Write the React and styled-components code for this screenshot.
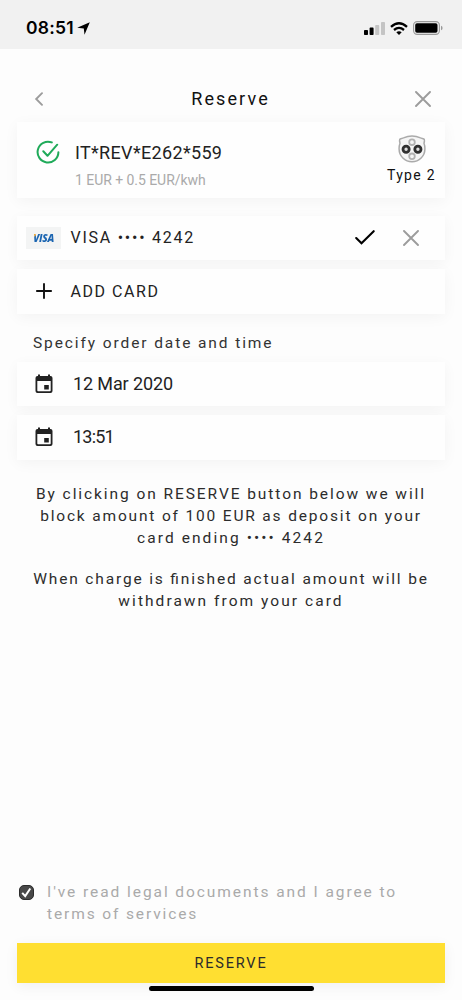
import React from "react";
import styled, { createGlobalStyle } from "styled-components";

const GlobalStyle = createGlobalStyle`
  * {
    box-sizing: border-box;
  }

  body {
    margin: 0;
    background: #fdfdfd;
    font-family: Roboto, "Liberation Sans", sans-serif;
    color: #222;
  }
`;

const Screen = styled.div`
  width: 462px;
  height: 1000px;
  display: flex;
  flex-direction: column;
  background: #fdfdfd;
  overflow: hidden;
`;

const StatusBar = styled.div`
  height: 49px;
  flex-shrink: 0;
  padding: 7px 19px 0 26px;
  display: flex;
  align-items: center;
  justify-content: space-between;
  background: #f1f1f1;
  color: #000;
`;

const Clock = styled.div`
  display: flex;
  align-items: center;
  gap: 3px;
  font-family: Inter, "Liberation Sans", sans-serif;
  font-size: 17.5px;
  font-weight: 600;
  letter-spacing: 0.2px;
  line-height: 20px;
`;

const StatusIcons = styled.div`
  display: flex;
  align-items: center;
  gap: 5px;
`;

const Header = styled.header`
  height: 73px;
  flex-shrink: 0;
  padding: 27px 31px 0 34px;
  display: flex;
  align-items: flex-start;
  justify-content: space-between;
`;

const Title = styled.h1`
  margin: 0;
  padding-left: 2px;
  height: 46px;
  font-size: 18px;
  font-weight: 400;
  line-height: 46px;
  letter-spacing: 2.1px;
  color: #111;
`;

const IconButton = styled.button`
  height: 46px;
  padding: 0;
  border: 0;
  background: none;
  display: flex;
  align-items: center;
`;

const Card = styled.section`
  height: ${(props) => props.$height || "44.5px"};
  flex-shrink: 0;
  margin: ${(props) => props.$margin || "0 17px 9px"};
  padding-left: ${(props) => props.$left || "18px"};
  display: flex;
  align-items: ${(props) => props.$align || "center"};
  background: #fefefe;
  box-shadow: 0 3px 14px rgba(0, 0, 0, 0.045);
`;

const StationIcon = styled.svg`
  margin-top: 18px;
`;

const Station = styled.div`
  flex: 1;
  padding: 18px 0 0 14px;
`;

const StationId = styled.div`
  font-size: 18px;
  line-height: 25px;
  letter-spacing: 0.33px;
`;

const Price = styled.div`
  margin-top: 4px;
  font-size: 14px;
  line-height: 23px;
  letter-spacing: -0.05px;
  color: #aaa;
`;

const Plug = styled.div`
  width: 67px;
  padding-top: 13px;
  display: flex;
  flex-direction: column;
  align-items: center;
  font-size: 14px;
  line-height: 24px;
  letter-spacing: 1.3px;
  color: #111;
`;

const VisaBadge = styled.div`
  width: 35px;
  height: 22px;
  display: flex;
  align-items: center;
  justify-content: center;
  background: #f3f4f4;
`;

const VisaMark = styled.span`
  padding: 0 1px;
  font-family: "Open Sans", sans-serif;
  font-size: 10px;
  font-weight: 800;
  font-style: italic;
  line-height: 22px;
  letter-spacing: -0.3px;
  background: linear-gradient(135deg, #efa93c 8px, #1b65b1 9px);
  -webkit-background-clip: text;
  color: transparent;
`;

const RowText = styled.span`
  flex: 1;
  margin-left: ${(props) => props.$left};
  padding-top: ${(props) => props.$drop || 0};
  font-size: ${(props) => props.$size || "16px"};
  line-height: 24px;
  letter-spacing: ${(props) => props.$spacing};
`;

const Actions = styled.div`
  display: flex;
  align-items: center;
  gap: 28px;
  padding-right: 26px;
`;

const Label = styled.div`
  height: 48px;
  flex-shrink: 0;
  margin-top: -9px;
  padding: 18.5px 33px 0;
  font-size: 15.5px;
  line-height: 22px;
  color: #333;
`;

const Notice = styled.div`
  margin-top: 14px;
  text-align: center;
  font-size: 15.5px;
  line-height: 22px;
  color: #2c2c2c;

  p {
    margin: 0 0 19px;
  }
`;

const Line = styled.span`
  display: block;
  letter-spacing: ${(props) => props.$spacing || "1.9px"};
  font-feature-settings: ${(props) => (props.$ligatures ? '"liga" 1' : "normal")};
`;

const Footer = styled.footer`
  margin-top: auto;
  padding: 0 17px 9px;
  display: flex;
  flex-direction: column;
`;

const Terms = styled.label`
  display: flex;
  align-items: flex-start;
  padding: 0 0 18px 2px;
  gap: 13px;
  font-size: 15.5px;
  line-height: 22px;
  color: #aaa;

  svg {
    margin-top: 4px;
  }
`;

const ReserveButton = styled.button`
  height: 40px;
  border: 0;
  padding: 0;
  background: #ffdf31;
  box-shadow: 0 3px 14px rgba(0, 0, 0, 0.06);
  color: #2b2b2b;
  font-family: inherit;
  font-size: 14.5px;
  letter-spacing: 1.8px;
`;

const HomeIndicator = styled.div`
  width: 165px;
  height: 5.5px;
  margin: 2.5px auto 0;
  border-radius: 3px;
  background: #000;
`;

const CloseIcon = ({ size = 16 }) => (
  <svg width={size} height={size} viewBox="0 0 16 16">
    <path d="M1 1l14 14M15 1L1 15" stroke="#9c9c9c" strokeWidth="1.9" strokeLinecap="round" />
  </svg>
);

const CalendarIcon = () => (
  <svg width="18" height="20" viewBox="0 0 18 20">
    <path
      fill="#222"
      fillRule="evenodd"
      d="M3 .5h2V2h8V.5h2V2h.5Q17.5 2 17.5 4v13q0 2-2 2h-13q-2 0-2-2V4q0-2 2-2H3zM2.3 7v9.4q0 .8.8.8h11.8q.8 0 .8-.8V7zM9.2 11h4.6v4.4H9.2z"
    />
  </svg>
);

const PlugIcon = () => (
  <svg width="28" height="28" viewBox="0 0 28 28" fill="none">
    <path
      d="M5.5 2.9Q14-.9 22.5 2.9L25.8 4Q26.6 4.4 26.4 6.5L26 8.3Q27 11 26.9 14A12.9 12.8 0 0 1 1.1 14Q1 11 2 8.3L1.6 6.5Q1.4 4.4 2.2 4z"
      stroke="#aaa"
      strokeWidth="1.5"
      fill="#f5f5f5"
    />
    <circle cx="14" cy="7.2" r="2.8" stroke="#b2b2b2" strokeWidth="1.8" />
    <circle cx="14" cy="21.3" r="2.8" stroke="#b2b2b2" strokeWidth="1.8" />
    <circle cx="8.1" cy="14.3" r="3.1" stroke="#303030" strokeWidth="2.8" fill="#ddd" />
    <circle cx="19.9" cy="14.3" r="3.1" stroke="#303030" strokeWidth="2.8" fill="#ddd" />
  </svg>
);

const App = () => {
  return (
    <>
      <GlobalStyle />
      <Screen>
        <StatusBar>
          <Clock>
            08:51
            <svg width="13" height="13" viewBox="0 0 13 13">
              <path d="M12.8.2L7.5 12.8 6.8 6.5.2 5.8z" />
            </svg>
          </Clock>
          <StatusIcons>
            <svg width="21" height="13" viewBox="0 0 21 13">
              <rect x="0" y="8" width="4" height="5" rx=".8" />
              <rect x="5.6" y="5.6" width="4" height="7.4" rx=".8" />
              <rect x="11.2" y="3" width="4" height="10" rx=".8" fill="#c4c4c4" />
              <rect x="17" y="0" width="4" height="13" rx=".8" fill="#c4c4c4" />
            </svg>
            <svg width="18" height="13" viewBox="0 0 18 13" fill="none" stroke="#000" strokeWidth="2.3">
              <path d="M1 4.8Q9-2.2 17 4.8M4 8Q9 3.8 14 8" />
              <path d="M6.3 10.3Q9 8.3 11.7 10.3L9 13z" fill="#000" stroke="none" />
            </svg>
            <svg width="30" height="14" viewBox="0 0 30 14">
              <rect x=".6" y=".6" width="25.8" height="12.8" rx="3.6" fill="none" stroke="#999" strokeWidth="1.1" />
              <rect x="2.2" y="2.2" width="22.3" height="9.6" rx="1.8" />
              <path d="M28 4.7q1.6.6 1.6 2.3T28 9.3z" fill="#999" />
            </svg>
          </StatusIcons>
        </StatusBar>

        <Header>
          <IconButton aria-label="Back">
            <svg width="10" height="14" viewBox="0 0 10 14" fill="none">
              <path d="M8 1.2L2.2 7 8 12.8" stroke="#9c9c9c" strokeWidth="1.9" strokeLinecap="round" />
            </svg>
          </IconButton>
          <Title>Reserve</Title>
          <IconButton aria-label="Close">
            <CloseIcon />
          </IconButton>
        </Header>

        <Card $height="76px" $margin="0 17px 17.5px" $left="19px" $align="flex-start">
          <StationIcon width="25" height="25" viewBox="0 0 25 25" fill="none">
            <path
              d="M15.8 2.4A10.4 10.4 0 1 0 22.4 12.2M7.3 11.3l4.2 4.5L21.2 4.7"
              stroke="#1faa59"
              strokeWidth="2"
              strokeLinecap="round"
              strokeLinejoin="round"
            />
          </StationIcon>
          <Station>
            <StationId>IT*REV*E262*559</StationId>
            <Price>1 EUR + 0.5 EUR/kwh</Price>
          </Station>
          <Plug>
            <PlugIcon />
            <span>Type 2</span>
          </Plug>
        </Card>

        <Card $left="9px">
          <VisaBadge>
            <VisaMark>VISA</VisaMark>
          </VisaBadge>
          <RowText $left="9.5px" $drop="1px" $spacing="1.75px">
            VISA •••• 4242
          </RowText>
          <Actions>
            <svg width="20" height="15" viewBox="0 0 20 15" fill="none">
              <path d="M1.2 8l5.3 5.3L18.7 1.2" stroke="#000" strokeWidth="2.1" strokeLinecap="round" />
            </svg>
            <CloseIcon />
          </Actions>
        </Card>

        <Card>
          <svg width="18" height="18" viewBox="0 0 18 18">
            <path d="M9 1.2v15.6M1.2 9h15.6" stroke="#111" strokeWidth="1.9" />
          </svg>
          <RowText $left="17.5px" $drop="2px" $spacing="1.55px">
            ADD CARD
          </RowText>
        </Card>

        <Label>
          <Line>Specify order date and time</Line>
        </Label>

        <Card>
          <CalendarIcon />
          <RowText $left="20px" $size="18px" $spacing="-0.12px">
            12 Mar 2020
          </RowText>
        </Card>
        <Card>
          <CalendarIcon />
          <RowText $left="20px" $size="18px" $spacing="-0.8px">
            13:51
          </RowText>
        </Card>

        <Notice>
          <p>
            <Line $spacing="1.93px">By clicking on RESERVE button below we will</Line>
            <Line $spacing="1.83px">block amount of 100 EUR as deposit on your</Line>
            <Line $spacing="2.08px">card ending •••• 4242</Line>
          </p>
          <p>
            <Line $spacing="1.84px" $ligatures>
              When charge is finished actual amount will be
            </Line>
            <Line $spacing="2.05px">withdrawn from your card</Line>
          </p>
        </Notice>

        <Footer>
          <Terms>
            <svg width="15" height="15" viewBox="0 0 15 15">
              <rect x=".5" y=".5" width="14" height="14" rx="4.5" fill="#484848" stroke="#2c2c2c" />
              <path d="M3.2 7.8l3 3.3L11.3 3.5" fill="none" stroke="#fff" strokeWidth="2" />
            </svg>
            <span>
              <Line $spacing="1.93px">I've read legal documents and I agree to</Line>
              <Line $spacing="1.88px">terms of services</Line>
            </span>
          </Terms>
          <ReserveButton>RESERVE</ReserveButton>
          <HomeIndicator />
        </Footer>
      </Screen>
    </>
  );
};

export default App;
